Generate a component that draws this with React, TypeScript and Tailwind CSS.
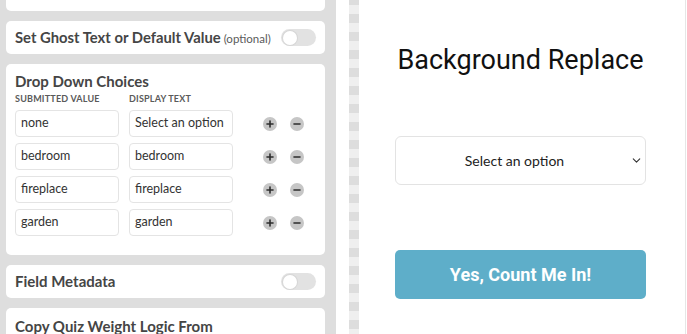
import { ChevronDown } from 'lucide-react';

const choices = [
  { value: 'none', label: 'Select an option' },
  { value: 'bedroom', label: 'bedroom' },
  { value: 'fireplace', label: 'fireplace' },
  { value: 'garden', label: 'garden' },
];

function Toggle() {
  return (
    <div className="w-[35px] h-[17px] rounded-full bg-[#e2e2e2] flex items-center px-[2px] shrink-0">
      <div className="w-[14px] h-[14px] rounded-full bg-white shadow-[0_0_0_1px_#d6d6d6]" />
    </div>
  );
}

function RoundBtn({ minus }: { minus?: boolean }) {
  return (
    <div className="w-[14px] h-[14px] rounded-full bg-[#c6c6c6] flex items-center justify-center">
      <svg width="8" height="8" viewBox="0 0 8 8">
        <path d="M1 4h6" stroke="#2d2d2d" strokeWidth="1.6" strokeLinecap="round" />
        {!minus && <path d="M4 1v6" stroke="#2d2d2d" strokeWidth="1.6" strokeLinecap="round" />}
      </svg>
    </div>
  );
}

export default function App() {
  return (
    <div className="w-[687px] h-[334px] overflow-hidden flex bg-white font-['Lato',sans-serif]">
      {/* Settings sidebar */}
      <div className="w-[336px] shrink-0 bg-[#dedede] pl-[6px] pr-[11px] overflow-hidden">
        <div className="flex flex-col gap-[10px] mt-[-22px] text-[#454545]">
          <div className="h-[33px] rounded-[5px] bg-white" />

          <div className="h-[33px] rounded-[5px] bg-white flex items-center justify-between pl-[9px] pr-[9px]">
            <div className="flex items-baseline gap-[3px]">
              <span className="text-[14.8px] font-bold">Set Ghost Text or Default Value</span>
              <span className="text-[11.5px] text-[#5a5a5a]">(optional)</span>
            </div>
            <Toggle />
          </div>

          <div className="h-[191px] rounded-[5px] bg-white px-[9px] pt-[6px]">
            <h3 className="text-[15px] font-bold leading-[22px]">Drop Down Choices</h3>
            <div className="flex text-[9px] font-bold text-[#5a5a5a] tracking-[0.2px] leading-[12px] mt-[1px]">
              <span className="w-[114px]">SUBMITTED VALUE</span>
              <span>DISPLAY TEXT</span>
            </div>
            <div className="flex flex-col gap-[6px] mt-[5px]">
              {choices.map((c) => (
                <div key={c.value} className="flex items-center">
                  <div className="w-[104px] h-[27px] rounded-[4px] border border-[#e4e4e4] flex items-center px-[5px] text-[12.5px] text-[#333] whitespace-nowrap">
                    {c.value}
                  </div>
                  <div className="w-[104px] h-[27px] ml-[10px] rounded-[4px] border border-[#e4e4e4] flex items-center px-[5px] text-[12.5px] text-[#333] whitespace-nowrap">
                    {c.label}
                  </div>
                  <div className="flex gap-[13px] ml-[30px]">
                    <RoundBtn />
                    <RoundBtn minus />
                  </div>
                </div>
              ))}
            </div>
          </div>

          <div className="h-[33px] rounded-[5px] bg-white flex items-center justify-between px-[9px]">
            <span className="text-[15px] font-bold">Field Metadata</span>
            <Toggle />
          </div>

          <div className="h-[40px] rounded-[5px] bg-white px-[9px] pt-[6px]">
            <span className="text-[15px] font-bold">Copy Quiz Weight Logic From</span>
          </div>
        </div>
      </div>

      <div className="w-[13px] shrink-0 bg-white" />
      <div className="w-[10px] shrink-0 bg-[repeating-linear-gradient(to_bottom,#dddddd_0px,#dddddd_5px,#efefef_5px,#efefef_14px,#dddddd_14px,#dddddd_18px)]" />

      {/* Preview */}
      <div className="w-[327px] shrink-0 border-r border-[#e6e6e6] pl-[36px] pr-[39px] flex flex-col font-['Roboto',sans-serif]">
        <h1 className="text-[27px] text-[#111] text-center mt-[43px] leading-[34px]">Background Replace</h1>
        <div className="mt-[59px] h-[49px] rounded-[6px] border border-[#e3e3e3] flex items-center relative">
          <span className="flex-1 text-center text-[14px] text-[#222] font-['Lato',sans-serif] pr-[12px]">Select an option</span>
          <ChevronDown size={13} strokeWidth={2} className="absolute right-[2px] text-[#333]" />
        </div>
        <button className="mt-[65px] h-[49px] rounded-[5px] bg-[#5eaec9] text-white text-[18px] font-bold">
          Yes, Count Me In!
        </button>
      </div>
    </div>
  );
}
